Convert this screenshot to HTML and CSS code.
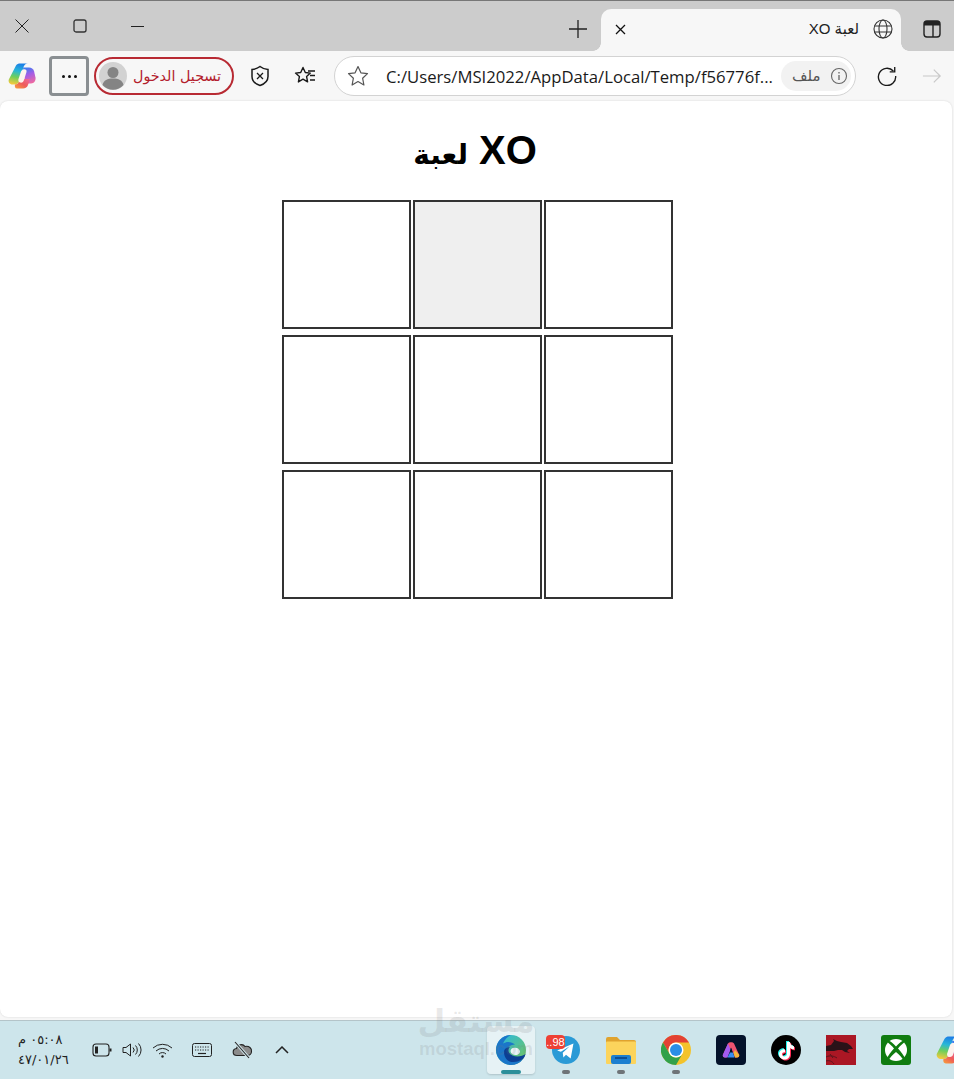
FILE: index.html
```html
<!DOCTYPE html>
<html lang="ar">
<head>
  <meta charset="UTF-8">
  <title>لعبة XO</title>
  <link rel="stylesheet" href="styles.css">
</head>
<body>
  <div class="tabstrip">
    <div class="win-buttons">
      <svg width="16" height="16" viewBox="0 0 16 16"><path d="M1.500 1.500l13 13M14.500 1.500l-13 13" stroke="#222" fill="none"/></svg>
      <svg width="16" height="16" viewBox="0 0 16 16"><rect x="2" y="2" width="12" height="12" rx="2" stroke="#333" stroke-width="1.300" fill="none"/></svg>
      <svg width="16" height="16" viewBox="0 0 16 16"><path d="M1 8.500h13" stroke="#222" fill="none"/></svg>
    </div>
    <div class="tabs-right">
      <svg class="new-tab" width="18" height="18" viewBox="0 0 18 18"><path d="M9 0v18M0 9h18" stroke="#222" stroke-width="1.300" fill="none"/></svg>
      <div class="tab">
        <svg width="11" height="11" viewBox="0 0 11 11"><path d="M1 1l9 9M10 1l-9 9" stroke="#111" stroke-width="1.300" fill="none"/></svg>
        <span class="tab-title" dir="rtl">لعبة XO</span>
        <svg class="tab-globe" width="20" height="20" viewBox="0 0 20 20" fill="none" stroke="#333" stroke-width="1.100"><circle cx="10" cy="10" r="9"/><ellipse cx="10" cy="10" rx="4" ry="9"/><path d="M1.500 7h17M1.500 13h17"/></svg>
      </div>
      <svg class="side-btn" width="18" height="18" viewBox="0 0 18 18" fill="none"><rect x="1" y="1" width="16" height="16" rx="3" stroke="#222" stroke-width="1.400"/><path d="M1 5.500V4a3 3 0 0 1 3-3h10a3 3 0 0 1 3 3v1.500z" fill="#222"/><path d="M10 5v12" stroke="#222" stroke-width="1.400"/></svg>
    </div>
  </div>

  <div class="toolbar">
    <svg width="28" height="28" viewBox="0 0 28 28">
      <defs>
        <linearGradient id="cpA" x1="0.500" y1="0" x2="0.300" y2="1"><stop offset="0" stop-color="#1c7fe6"/><stop offset=".35" stop-color="#27b7d8"/><stop offset=".65" stop-color="#6fcf5a"/><stop offset="1" stop-color="#f7c93c"/></linearGradient>
        <linearGradient id="cpB" x1="0.300" y1="0" x2="0.600" y2="1"><stop offset="0" stop-color="#3d7df0"/><stop offset=".45" stop-color="#a45ce6"/><stop offset="1" stop-color="#ee6aa0"/></linearGradient>
        <linearGradient id="cpC" x1="0" y1="1" x2="1" y2="0"><stop offset="0" stop-color="#f7a13a"/><stop offset=".5" stop-color="#ef5a5a"/><stop offset="1" stop-color="#ec6aa0"/></linearGradient>
        <symbol id="copilotMark" viewBox="0 0 28 28">
          <path d="M8 3.500C9 2 10.500 1.500 12 1.500h8c-2.500.2-3.800 1.500-4.500 3.500L11.500 19c-.6 2-2.500 3.500-4.500 3.500H4.500C1.700 22.500 0 20 .8 17.500z" fill="url(#cpA)"/>
          <path d="M15 5.500h6c2.500 0 4.200 1.500 5 3.500l1.500 6.500c.5 3-1.500 6-4.500 6h-6z" fill="url(#cpB)"/>
          <path d="M7 22.500c2 0 3.500-1 4.500-3.500l1.500-2h9l-2 6c-.7 2-2.500 3.500-5 3.500H9c-2 0-2.500-2-2-4z" fill="url(#cpC)"/>
          <path d="M15.500 7.500c2-.5 3.500.5 3 2.500l-2.500 8c-.5 2-2 3-4 2.500-1.500-.5-2-2-1.500-3.500l2.500-7.500c.5-1 1.500-2 2.500-2z" fill="#fdf3ee"/>
        </symbol>
      </defs>
      <use href="#copilotMark" width="28" height="28"/>
    </svg>
    <div class="more-btn"><span class="dot"></span><span class="dot"></span><span class="dot"></span></div>
    <div class="signin">
      <svg width="28" height="28" viewBox="0 0 28 28"><circle cx="14" cy="14" r="14" fill="#d2d2d2"/><circle cx="14" cy="10.500" r="5.500" fill="#848484"/><path d="M3.500 23c1-5 5-6.500 10.500-6.500S23.500 18 24.500 23a14 14 0 0 1-21 0z" fill="#848484"/></svg>
      <span class="signin-text" dir="rtl">تسجيل الدخول</span>
    </div>
    <svg class="shield" width="20" height="22" viewBox="0 0 20 22" fill="none" stroke="#1a1a1a" stroke-width="1.500"><path d="M10 1.500c2.500 2 5 2.800 8 3v7c0 4.500-3.500 7.500-8 9-4.500-1.500-8-4.500-8-9v-7c3-.2 5.500-1 8-3z"/><path d="M7 8l6 6M13 8l-6 6" stroke-width="1.300"/></svg>
    <svg class="favorites" width="22" height="20" viewBox="0 0 22 20" fill="none" stroke="#1a1a1a" stroke-width="1.400"><path d="M9 1.500l2.300 5 5 .6-3.700 3.500 1 5.300L9 13.200l-4.600 2.700 1-5.300L1.500 7.100l5.200-.6z" stroke-linejoin="round"/><path d="M14 5h7M16 9.500h5M16 14h5"/></svg>
    <div class="addressbar">
      <svg width="22" height="22" viewBox="0 0 22 22" fill="none" stroke="#555" stroke-width="1.200"><path d="M11 1.500l2.900 6.300 6.600.8-4.900 4.600 1.300 6.800-5.900-3.400-5.900 3.400 1.300-6.800-4.900-4.600 6.600-.8z" stroke-linejoin="round"/></svg>
      <span class="url">C:/Users/MSI2022/AppData/Local/Temp/f56776f...</span>
      <div class="file-chip">
        <span class="chip-text" dir="rtl">ملف</span>
        <svg width="18" height="18" viewBox="0 0 18 18" fill="none" stroke="#666" stroke-width="1.100"><circle cx="9" cy="9" r="7.500"/><path d="M9 8v5M9 5v1.500" stroke-width="1.300"/></svg>
      </div>
    </div>
    <svg class="reload" width="20" height="20" viewBox="0 0 22 22" fill="none" stroke="#1a1a1a" stroke-width="1.500"><path d="M18 5.500A9.500 9.500 0 1 0 20.500 11"/><path d="M19.500 1v5.500H14"/></svg>
    <svg class="forward" width="20" height="18" viewBox="0 0 22 18" fill="none" stroke="#c8c8c8" stroke-width="1.300"><path d="M1 9h19M13 2l7 7-7 7"/></svg>
  </div>

  <main class="page">
    <h1 class="title"><span class="title-ar">لعبة</span> XO</h1>
    <div class="board">
      <div class="cell"></div>
      <div class="cell cell-hover"></div>
      <div class="cell"></div>
      <div class="cell"></div>
      <div class="cell"></div>
      <div class="cell"></div>
      <div class="cell"></div>
      <div class="cell"></div>
      <div class="cell"></div>
    </div>
  </main>

  <footer class="taskbar">
    <div class="tray">
      <div class="clock">
        <span class="clock-time" dir="rtl">٠٥:٠٨ م</span>
        <span>٤٧/٠١/٢٦</span>
      </div>
      <svg width="21" height="14" viewBox="0 0 21 14" fill="none" stroke="#222" stroke-width="1.100"><rect x="1" y="1" width="16" height="12" rx="3"/><rect x="3" y="3.500" width="3" height="7" fill="#222" stroke="none"/><path d="M18.500 5.500v3" stroke-width="2"/></svg>
      <svg class="tray-sound" width="21" height="16" viewBox="0 0 21 16" fill="none" stroke="#222" stroke-width="1"><path d="M1 5.500h3L8.500 2v12L4 10.500H1z"/><path d="M11 5.500a3.500 3.500 0 0 1 0 5M13.500 3.500a6.500 6.500 0 0 1 0 9M16.500 1.500a9.500 9.500 0 0 1 0 13"/></svg>
      <svg class="tray-wifi" width="21" height="15" viewBox="0 0 21 15" fill="none" stroke="#222" stroke-width="1"><path d="M1 5a14 14 0 0 1 19 0M4 8a9.500 9.500 0 0 1 13 0M7 11a5 5 0 0 1 7 0"/><circle cx="10.500" cy="13.500" r="1.200" fill="#222" stroke="none"/></svg>
      <svg class="tray-keys" width="20" height="14" viewBox="0 0 20 14" fill="none" stroke="#222" stroke-width="1"><rect x=".5" y=".5" width="19" height="13" rx="2"/><path d="M3 4h14M3 7h14" stroke-dasharray="1.200 1.300"/><path d="M6 10.500h8" stroke-width="1.200"/></svg>
      <svg class="tray-cloud" width="21" height="18" viewBox="0 0 21 18"><path d="M5 14.500c-5 0-5-6.500-.5-7C5.500 3 11 2.500 13 5.500c4-1 7 2 6.500 5 0 2.500-2 4-4 4z" fill="#8b8b8b" stroke="#222" stroke-width="1.100"/><path d="M3 1l14 16" stroke="#cfe5eb" stroke-width="3"/><path d="M3 1l14 16" stroke="#222" stroke-width="1.100"/></svg>
      <svg class="tray-chevron" width="14" height="8" viewBox="0 0 14 8" fill="none" stroke="#222" stroke-width="1.500"><path d="M1 7l6-6 6 6"/></svg>
    </div>
    <div class="apps">
      <div class="app app-active">
        <svg width="30" height="30" viewBox="0 0 30 30">
          <defs><linearGradient id="edgeA" x1="0.300" y1="0" x2="1" y2="0.700"><stop offset="0" stop-color="#2fb9d6"/><stop offset="1" stop-color="#6cc56a"/></linearGradient></defs>
          <circle cx="15" cy="15" r="15" fill="url(#edgeA)"/>
          <path d="M15 0C6 0 0 7 0 15c0 8 7 15 15 15 5 0 9-2 12-6-4 2-9 2-12 0-4-2-6-7-3.500-10.500C13 11 16 9.500 19 9.500 15.500 6.500 11 6 7 8.500 9 4 12 1 15 0z" fill="#1b76c9"/>
          <path d="M8 17c0 6 4 10 9 10 4 0 7-1 10-3 1-1 2-3 2.500-5-2 1.500-5 2.500-8 2.500-3.500 0-7-1.500-8.500-4-1-2-.5-4 1-5.500C10.500 12.500 8 14 8 17z" fill="#0c3f94"/>
          <path d="M17 13c3-1 6 0 7 3 .3 2-1.500 4-4.500 4-3.500 0-6-3-4.500-5.500.5-.7 1-1.200 2-1.500z" fill="#e9f4f8"/>
        </svg>
        <span class="pip pip-active"></span>
      </div>
      <div class="app">
        <svg class="telegram" width="28" height="28" viewBox="0 0 30 30"><circle cx="15" cy="15" r="15" fill="#2a9ad6"/><path d="M5.500 15.500L23 8l-3 16-5-3.800-2.800 2.800-.7-5 7.500-7-9.500 5.800z" fill="#fff"/></svg>
        <span class="badge">..98</span>
        <span class="pip"></span>
      </div>
      <div class="app">
        <svg class="folder" width="30" height="27" viewBox="0 0 30 27"><path d="M0 2a2 2 0 0 1 2-2h9l3 3h14a2 2 0 0 1 2 2v3H0z" fill="#e0a32e"/><rect y="4.500" width="30" height="22.500" rx="1" fill="#fcd45c"/><rect x="5" y="18" width="20" height="9" rx="2" fill="#1c7fd0"/><rect x="9" y="20" width="12" height="2" fill="#0d4f96"/></svg>
        <span class="pip"></span>
      </div>
      <div class="app">
        <svg width="30" height="30" viewBox="0 0 30 30"><circle cx="15" cy="15" r="15" fill="#f3c32b"/><path d="M28 7.500A15 15 0 0 0 2 7.500L8.500 18.750A7.500 7.500 0 0 1 15 7.500z" fill="#e34133"/><path d="M2 7.500A15 15 0 0 0 15 30L21.500 18.750A7.500 7.500 0 0 1 8.500 18.750z" fill="#32a14a"/><circle cx="15" cy="15" r="7.500" fill="#fff"/><circle cx="15" cy="15" r="6" fill="#2a8ee6"/></svg>
        <span class="pip"></span>
      </div>
      <div class="app">
        <svg width="30" height="30" viewBox="0 0 30 30"><rect width="30" height="30" rx="4" fill="#04122a"/><path d="M12 8.500c1-1.800 5-1.800 6 0l5 11c.8 2-.5 3-2 3h-2l-4-10-2 5-2.500 5H9c-1.500 0-2.800-1-2-3z" fill="#ef5470"/><path d="M12 8.500L7 19.500c-.8 2 .5 3 2 3h2.500l3-8z" fill="#a35bf0"/><path d="M19 15l4 4.500c.8 2-.5 3-2 3h-2l-1.500-4.500z" fill="#f5b63a"/><path d="M11.500 22.500l2.500-5h3l1.500 5z" fill="#3a8df0"/><path d="M15 13l1 3h-2z" fill="#04122a"/></svg>
      </div>
      <div class="app">
        <svg width="30" height="30" viewBox="0 0 30 30">
          <circle cx="15" cy="15" r="15" fill="#000"/>
          <path d="M16 7h3c.3 2.500 1.700 4 4 4.200v3c-1.500 0-2.900-.5-4-1.300V19c0 3.500-2.500 5.500-5.500 5.500S8 22 8 19.200c0-3 2.700-5.500 6-5v3.200c-1.500-.5-3 .5-3 1.900 0 1.200 1 2.200 2.300 2.200 1.500 0 2.700-1 2.700-2.800z" fill="#25f4ee" transform="translate(-1 -1)"/>
          <path d="M16 7h3c.3 2.500 1.700 4 4 4.200v3c-1.500 0-2.900-.5-4-1.300V19c0 3.500-2.500 5.500-5.500 5.500S8 22 8 19.200c0-3 2.700-5.500 6-5v3.200c-1.500-.5-3 .5-3 1.900 0 1.200 1 2.200 2.300 2.200 1.500 0 2.700-1 2.700-2.800z" fill="#fe2c55" transform="translate(1 1)"/>
          <path d="M16 7h3c.3 2.500 1.700 4 4 4.200v3c-1.500 0-2.900-.5-4-1.300V19c0 3.500-2.500 5.500-5.500 5.500S8 22 8 19.200c0-3 2.700-5.500 6-5v3.200c-1.500-.5-3 .5-3 1.900 0 1.200 1 2.200 2.300 2.200 1.500 0 2.700-1 2.700-2.800z" fill="#fff"/>
        </svg>
      </div>
      <div class="app">
        <svg width="30" height="30" viewBox="0 0 30 30"><rect width="30" height="30" fill="#ab1724"/><path d="M0 11l5-1 3-4-1-2 4 2 4 1 6 1 4 3 2 3-4 0-2 2 3 2-5-1-3-2-4 0-4 1-8 0z" fill="#2a1218"/><path d="M0 22c4-2 8-1 11 1M0 26c3-1 6 0 8 3M4 19l3 4" stroke="#5c141c" fill="none"/></svg>
      </div>
      <div class="app">
        <svg width="30" height="30" viewBox="0 0 30 30"><rect width="30" height="30" rx="3" fill="#107c10"/><circle cx="15" cy="15" r="11" fill="#fff"/><path d="M15 11.500C12 8.500 9.500 6 7.500 5.500l-2 1C8 8 11 11 13 13.500c-3 3-6 7-7.500 11l1.500 1.500c1.500-3 5-6.500 8-9 3 2.500 6.500 6 8 9l1.500-1.500c-1.500-4-4.500-8-7.500-11 2-2.500 5-5.500 7.500-7l-2-1c-2 .5-4.500 3-7.500 6z" fill="#107c10"/></svg>
      </div>
      <div class="app">
        <svg width="30" height="30" viewBox="0 0 28 28"><use href="#copilotMark" width="28" height="28"/></svg>
      </div>
    </div>
    <div class="watermark">
      <span class="wm-ar" dir="rtl">مستقل</span>
      <span class="wm-en">mostaql.com</span>
    </div>
  </footer>
</body>
</html>
```

FILE: styles.css
```css
* {
  box-sizing: border-box;
}
body {
  margin: 0;
  width: 954px;
  height: 1079px;
  overflow: hidden;
  display: flex;
  flex-direction: column;
  background: #f7f7f7;
  font-family: "Liberation Sans", "DejaVu Sans", sans-serif;
}
svg {
  display: block;
  flex: none;
}

/* title strip */
.tabstrip {
  height: 51px;
  flex: none;
  background: #cccccc;
  border-top: 1px solid #777;
  display: flex;
  justify-content: space-between;
}
.win-buttons {
  display: flex;
  align-items: center;
  gap: 42px;
  padding: 0 0 1px 14px;
  height: 50px;
}
.tabs-right {
  display: flex;
  align-items: flex-start;
}
.new-tab {
  margin: 19px 14px 0 0;
}
.tab {
  position: relative;
  width: 300px;
  height: 42px;
  margin-top: 8px;
  background: #f7f7f7;
  border-radius: 10px 10px 0 0;
  display: flex;
  align-items: center;
  padding: 0 8px 2px 14px;
}
.tab::before,
.tab::after {
  content: "";
  position: absolute;
  bottom: 0;
  width: 8px;
  height: 8px;
}
.tab::before {
  left: -8px;
  background: radial-gradient(circle at 0 0, transparent 7.5px, #f7f7f7 8px);
}
.tab::after {
  right: -8px;
  background: radial-gradient(circle at 100% 0, transparent 7.5px, #f7f7f7 8px);
}
.tab-title {
  margin-left: auto;
  font-size: 15px;
  color: #222;
}
.tab-globe {
  margin-left: 14px;
}
.side-btn {
  margin: 19px 13px 0 22px;
}

/* toolbar */
.toolbar {
  height: 50px;
  flex: none;
  display: flex;
  align-items: center;
  padding: 0 12px 0 8px;
  background: #f7f7f7;
}
.more-btn {
  width: 40px;
  height: 40px;
  margin-left: 13px;
  border: 3px solid #8a8f92;
  border-radius: 4px;
  display: flex;
  align-items: center;
  justify-content: center;
  gap: 3px;
}
.dot {
  width: 3px;
  height: 3px;
  border-radius: 50%;
  background: #111;
}
.signin {
  width: 140px;
  height: 38px;
  margin-left: 5px;
  border: 2px solid #b82a33;
  border-radius: 19px;
  display: flex;
  align-items: center;
  padding-left: 3px;
}
.signin-text {
  margin-left: 6px;
  font-family: "DejaVu Sans", sans-serif;
  font-size: 14.3px;
  color: #b3202c;
  white-space: nowrap;
}
.shield {
  margin-left: 16px;
}
.favorites {
  margin-left: 24px;
}
.addressbar {
  width: 522px;
  height: 40px;
  margin-left: 18px;
  background: #fff;
  border: 1.500px solid #d3d3d3;
  border-radius: 20px;
  display: flex;
  align-items: center;
  padding: 0 4px 0 12px;
}
.url {
  margin-left: 17px;
  font-family: "Open Sans", "Liberation Sans", sans-serif;
  font-size: 16.7px;
  color: #1a1a1a;
  white-space: nowrap;
}
.file-chip {
  margin-left: auto;
  width: 70px;
  height: 30px;
  background: #f2f2f2;
  border-radius: 15px;
  display: flex;
  align-items: center;
  gap: 9px;
  padding-left: 11px;
}
.chip-text {
  font-family: "DejaVu Sans", sans-serif;
  font-size: 15px;
  color: #555;
}
.reload {
  margin-left: 21px;
}
.forward {
  margin-left: 25px;
}

/* page */
.page {
  flex: 1;
  background: #fff;
  margin: 0 2px 3px 0;
  border-radius: 8px;
  box-shadow: 0 0 2px rgba(0, 0, 0, 0.15);
  text-align: center;
  padding-top: 21px;
}
.title {
  height: 56px;
  margin: 0 0 22px;
  padding-right: 2px;
  font-size: 40px;
  line-height: 56px;
  font-weight: bold;
  color: #000;
}
.title-ar {
  font-size: 28px;
  line-height: 1;
}
.board {
  display: grid;
  grid-template-columns: repeat(3, 129px);
  gap: 6px 2px;
  justify-content: center;
  margin-left: 3px;
}
.cell {
  height: 129px;
  border: 2px solid #333;
  background: #fff;
}
.cell-hover {
  background: #efefef;
}

/* taskbar */
.taskbar {
  height: 59px;
  flex: none;
  position: relative;
  background: #cde5eb;
  border-top: 1px solid #b4c4c9;
  display: flex;
  align-items: center;
  padding-left: 18px;
}
.watermark {
  position: absolute;
  left: 416px;
  top: -20px;
  width: 120px;
  color: rgba(120, 120, 120, 0.16);
  display: flex;
  flex-direction: column;
  align-items: center;
  pointer-events: none;
}
.wm-ar {
  font-family: "DejaVu Sans", sans-serif;
  font-weight: bold;
  font-size: 32px;
  line-height: 40px;
}
.wm-en {
  font-weight: bold;
  font-size: 18.5px;
  line-height: 16px;
  white-space: nowrap;
}
.tray {
  display: flex;
  align-items: center;
}
.clock {
  width: 74px;
  display: flex;
  flex-direction: column;
  align-items: flex-start;
  font-family: "DejaVu Sans", sans-serif;
  font-size: 13px;
  line-height: 20px;
  color: #222;
}
.tray-sound {
  margin-left: 9px;
}
.tray-wifi {
  margin-left: 9px;
}
.tray-keys {
  margin-left: 19px;
}
.tray-cloud {
  margin-left: 20px;
}
.tray-chevron {
  margin-left: 22px;
}
.apps {
  position: absolute;
  left: 487px;
  top: 5px;
  display: flex;
}
.app {
  position: relative;
  width: 55px;
  height: 48px;
  flex: none;
  display: flex;
  justify-content: center;
  padding-top: 9px;
}
.app-active {
  width: 48px;
  margin-right: 3.5px;
  background: rgba(255, 255, 255, 0.5);
  border-radius: 4px;
  box-shadow: 0 1px 2px rgba(0, 0, 0, 0.15);
}
.telegram {
  margin-top: 1px;
}
.folder {
  margin-top: 2px;
}
.pip {
  position: absolute;
  left: 50%;
  bottom: 0;
  width: 8px;
  height: 4px;
  margin-left: -4px;
  border-radius: 2px;
  background: #6e7478;
}
.pip-active {
  width: 20px;
  margin-left: -10px;
  background: #2b8f9a;
}
.badge {
  position: absolute;
  left: 7.5px;
  top: 9px;
  width: 19px;
  height: 14px;
  border-radius: 4px;
  background: #ee4035;
  color: #fff;
  font-size: 11px;
  line-height: 14px;
  text-align: center;
  white-space: nowrap;
}
```
